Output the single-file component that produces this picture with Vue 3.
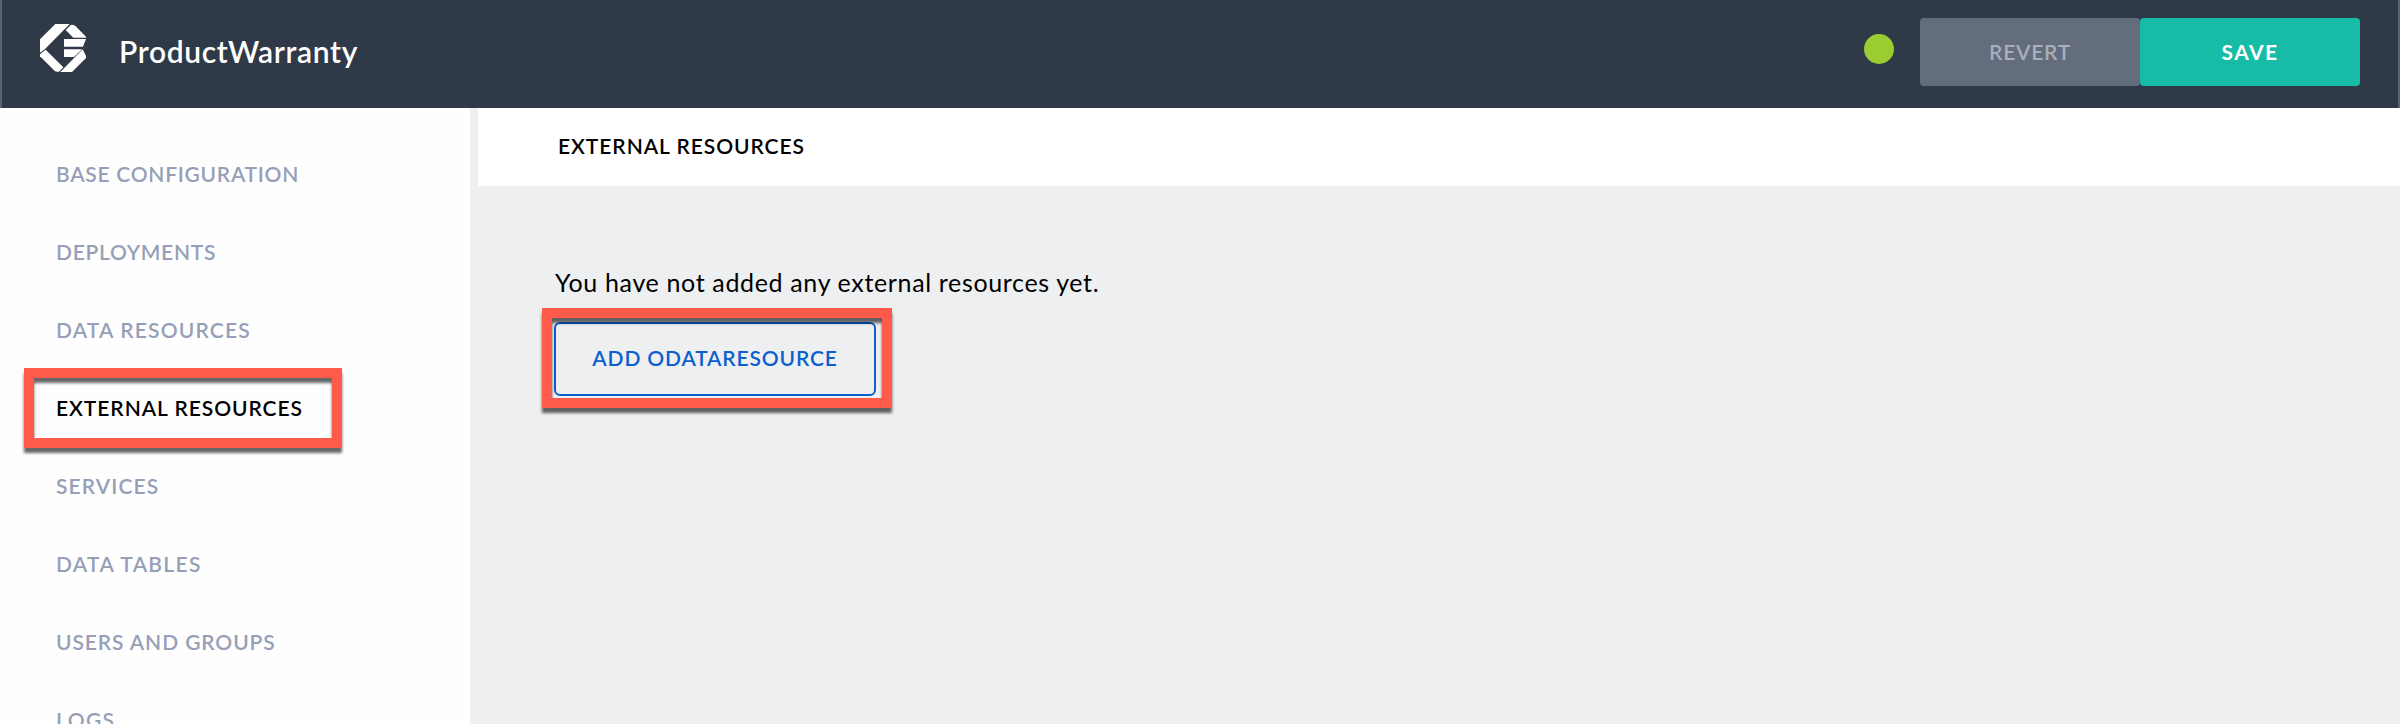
<script setup>
const sections = [
  { label: 'BASE CONFIGURATION', tracking: 0.73 },
  { label: 'DEPLOYMENTS', tracking: 0.7 },
  { label: 'DATA RESOURCES', tracking: 1.17 },
  { label: 'EXTERNAL RESOURCES', tracking: 0.95, active: true },
  { label: 'SERVICES', tracking: 1.1 },
  { label: 'DATA TABLES', tracking: 1.3 },
  { label: 'USERS AND GROUPS', tracking: 0.9 },
  { label: 'LOGS', tracking: 1.4 },
]
</script>

<template>
  <div class="app">
    <header class="topbar">
      <svg class="logo" viewBox="0 0 138 144" aria-hidden="true">
        <path d="M46 0H89L16 74L0 86V46Z" />
        <path d="M92 3Q101 1 107 7L138 38V41H100L77 18Z" />
        <path d="M72 45H138L129 68H72Z" />
        <path d="M72 76H126L102 99H72Z" />
        <path d="M17 77L70 130L57 143Q48 145 42 139L0 97V91Z" />
        <path d="M128 76L138 96V102L96 144H61Z" />
      </svg>
      <h1 class="title">ProductWarranty</h1>
      <span class="status"></span>
      <button class="btn revert">REVERT</button>
      <button class="btn save">SAVE</button>
    </header>
    <div class="body">
      <nav class="sidebar">
        <a
          v-for="s in sections"
          :key="s.label"
          class="item"
          :class="{ active: s.active }"
          :style="{ letterSpacing: s.tracking + 'px' }"
        >{{ s.label }}<span v-if="s.active" class="frame"></span></a>
      </nav>
      <main class="main">
        <h2 class="heading">EXTERNAL RESOURCES</h2>
        <section class="content">
          <p class="empty">You have not added any external resources yet.</p>
          <button class="add">ADD ODATARESOURCE<span class="frame"></span></button>
        </section>
      </main>
    </div>
  </div>
</template>

<style>
body { margin: 0; }
</style>

<style scoped>
.app {
  width: 2400px;
  height: 724px;
  display: flex;
  flex-direction: column;
  overflow: hidden;
  background: #eeeff1;
  font-family: Lato, "Liberation Sans", sans-serif;
  color: #000;
}
.topbar {
  box-sizing: border-box;
  flex: 0 0 108px;
  display: flex;
  align-items: flex-start;
  padding: 0 38px;
  background: #303948;
  border-left: 2px solid #5c6370;
  border-right: 2px solid #5c6370;
}
.logo {
  width: 46px;
  height: 48px;
  margin-top: 24px;
  fill: #fff;
}
.title {
  margin: 33px auto 0 33px;
  font-size: 30px;
  line-height: 36px;
  font-weight: 600;
  letter-spacing: 0.66px;
  color: #fff;
}
.status {
  width: 30px;
  height: 30px;
  margin: 34px 26px 0 0;
  border-radius: 50%;
  background: #9acd32;
}
.btn {
  width: 220px;
  height: 68px;
  margin: 18px 0 0;
  padding: 0;
  border: 0;
  border-radius: 4px;
  font: 600 21px/68px Lato, "Liberation Sans", sans-serif;
}
.revert {
  background: #636d7e;
  color: #a9afba;
  letter-spacing: 0.75px;
}
.save {
  background: #16bca5;
  color: #fff;
  font-weight: 700;
  letter-spacing: 1.4px;
}
.body {
  flex: 1;
  display: flex;
  min-height: 0;
}
.sidebar {
  box-sizing: border-box;
  flex: 0 0 470px;
  padding-top: 27px;
  background: #fefefe;
}
.item {
  position: relative;
  display: block;
  height: 78px;
  padding-left: 56px;
  line-height: 78px;
  font-size: 21px;
  font-weight: 600;
  color: #969fb7;
  white-space: nowrap;
}
.item.active {
  color: #000;
}
.frame {
  position: absolute;
  box-sizing: border-box;
  border: 10px solid #ff5a4c;
  filter: drop-shadow(0 5px 1.5px rgba(0, 0, 0, 0.6));
}
.item .frame {
  left: 24px;
  top: -1px;
  width: 318px;
  height: 80px;
}
.main {
  flex: 1;
  padding-left: 8px;
}
.heading {
  margin: 0;
  height: 78px;
  padding-left: 80px;
  background: #fff;
  font-size: 21px;
  line-height: 76px;
  font-weight: 600;
  letter-spacing: 0.95px;
}
.content {
  padding: 81px 0 0 76px;
}
.empty {
  margin: 0 0 25px;
  padding-left: 1px;
  font-size: 25px;
  line-height: 30px;
  letter-spacing: 0.65px;
}
.add {
  position: relative;
  display: block;
  box-sizing: border-box;
  width: 322px;
  height: 74px;
  padding: 0 0 2px;
  border: 2px solid #0b5fce;
  border-radius: 6px;
  background: transparent;
  color: #0b5fce;
  font: 600 21px/68px Lato, "Liberation Sans", sans-serif;
  letter-spacing: 0.85px;
}
.add .frame {
  left: -14px;
  top: -16px;
  width: 350px;
  height: 100px;
}
</style>
